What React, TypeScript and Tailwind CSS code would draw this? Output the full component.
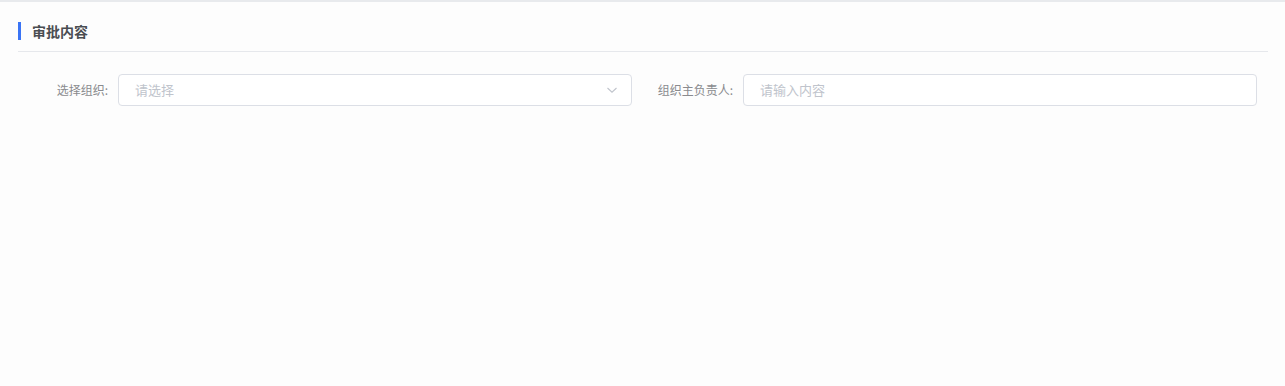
import React from "react";

const font = { fontFamily: '"Noto Sans CJK SC", "Noto Sans", sans-serif' };

function Field({ label, placeholder, select }: { label: string; placeholder: string; select?: boolean }) {
  return (
    <div className="flex w-[625px] items-center pr-[11px]">
      <label className="w-[100px] shrink-0 pr-[10px] text-right text-[12px] text-[#8a8b8e]">{label}</label>
      <div className="flex h-[32px] flex-1 items-center rounded-[4px] border border-[#dcdfe6] bg-white pl-[16px] pr-[12px]">
        <span className="flex-1 text-[13px] text-[#c0c4cc]">{placeholder}</span>
        {select && (
          <svg width="12" height="12" viewBox="0 0 12 12" fill="none" className="mr-[1px]">
            <path d="M1.5 4 L6 8.2 L10.5 4" stroke="#c0c4cc" strokeWidth="1.1" />
          </svg>
        )}
      </div>
    </div>
  );
}

export default function App() {
  return (
    <div className="h-[386px] w-[1285px] border-t-2 border-[#e8eaed] bg-[#fdfdfd]" style={font}>
      <div className="pl-[18px] pr-[17px] pt-[20px]">
        <div className="flex h-[18px] items-center border-l-[3px] border-[#3a74f5] pl-[11px]">
          <span className="text-[14px] font-bold text-[#4a4d52]">审批内容</span>
        </div>
        <div className="mt-[11px] h-px bg-[#e6e8ec]" />
        <div className="mt-[22px] flex">
          <Field label="选择组织:" placeholder="请选择" select />
          <Field label="组织主负责人:" placeholder="请输入内容" />
        </div>
      </div>
    </div>
  );
}
